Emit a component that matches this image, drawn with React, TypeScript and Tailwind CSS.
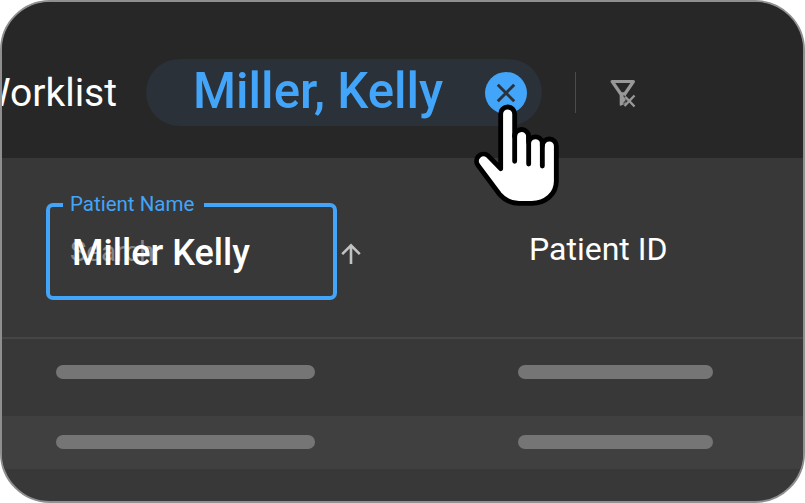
function CloseIcon() {
  return (
    <svg viewBox="0 0 42 42" className="h-[42px] w-[42px] shrink-0">
      <circle cx="21" cy="21" r="21" fill="#42a5f9" />
      <path d="M12.8 12.8 29.2 29.2M29.2 12.8 12.8 29.2" stroke="#2b323a" strokeWidth="3" />
    </svg>
  );
}

function ClearFilterIcon() {
  return (
    <svg viewBox="0 0 27 31" className="h-[31px] w-[27px] shrink-0" fill="none" stroke="#989898">
      <path d="M2.2 3.5H23.4L14.5 16.5H11.2Z" strokeWidth="3.2" strokeLinejoin="round" />
      <path d="M10.4 15H15V25L10.4 27Z" fill="#989898" strokeWidth="1.4" strokeLinejoin="round" />
      <path d="M13.5 17.5 17 21.5 13.5 25.5" stroke="#444" strokeWidth="1.2" />
      <path d="M15.5 19 24.5 28.5M24.5 17.5 14.5 28" strokeWidth="2.4" />
    </svg>
  );
}

function SortArrow() {
  return (
    <svg viewBox="0 0 20 22" className="h-[22px] w-[20px]" fill="none" stroke="#c2c2c2" strokeWidth="2.6">
      <path d="M10 21V2.5M1.2 11.2 10 2.4 18.8 11.2" />
    </svg>
  );
}

function HandCursor() {
  return (
    <svg viewBox="0 0 420 480" className="absolute left-[450px] top-[55px] h-[160px] w-[140px]" stroke="#000" strokeWidth="14.5" strokeLinecap="round" strokeLinejoin="round">
      <path
        fill="#fff"
        d="M152 341V177a21 21 0 0 1 42 0V245a21 21 0 0 1 42 -1V262a21 21 0 0 1 41 0V273a21 21 0 0 1 42 0V378C319 418 286 445 245 445H207C181 445 164 436 148 417L84 331A21 21 0 0 1 114 302Z"
      />
      <path fill="none" d="M194 240V319M236 244V327M277 262V333" />
    </svg>
  );
}

function PlaceholderRow({ className }: { className: string }) {
  return (
    <div className={`flex items-center pl-[54px] ${className}`}>
      <div className="h-[14px] w-[259px] rounded-full bg-[#757575]" />
      <div className="ml-[203px] h-[14px] w-[195px] rounded-full bg-[#757575]" />
    </div>
  );
}

export default function App() {
  return (
    <div className="relative h-[503px] w-[805px] overflow-hidden bg-white font-[Roboto,sans-serif]">
      <div className="flex h-full w-full flex-col overflow-hidden rounded-[50px] border-2 border-[#8f8f8f] bg-[#383838]">
        <header className="flex h-[156px] shrink-0 items-center bg-[#272727] pt-[25px]">
          <div className="flex w-[115px] shrink-0 justify-end overflow-hidden whitespace-nowrap text-[39px] leading-[60px] text-white">
            <span>Worklist</span>
          </div>
          <div className="ml-[29px] flex h-[67px] w-[396px] shrink-0 items-center justify-between rounded-full bg-[#2b3138] pl-[47px] pr-[15px]">
            <span className="whitespace-nowrap pb-[3px] text-[49.2px] font-medium leading-[60px] text-[#42a5f9]">Miller, Kelly</span>
            <CloseIcon />
          </div>
          <div className="ml-[33px] h-[41px] w-px bg-[#4b4b4b]" />
          <div className="ml-[34px] pt-[2px]">
            <ClearFilterIcon />
          </div>
        </header>

        <section className="flex h-[181px] shrink-0 items-start border-b-2 border-[#464646] pl-[44px] pt-[45px]">
          <div className="relative flex h-[97px] w-[291px] items-center rounded-[7px] border-4 border-[#42a5f9]">
            <label className="absolute -top-[17px] left-[13px] w-[141px] whitespace-nowrap bg-[#383838] pl-[7px] text-[20.5px] leading-[28px] text-[#42a5f9]">Patient Name</label>
            <span className="absolute left-[20px] top-[27px] text-[27.5px] leading-[36px] text-[#858585]">Search</span>
            <span className="relative ml-[22px] mt-[2px] whitespace-nowrap text-[36.1px] font-medium leading-[40px] text-white">Miller Kelly</span>
          </div>
          <div className="ml-[4px] mt-[40px]">
            <SortArrow />
          </div>
          <div className="ml-[168px] mt-[26px] whitespace-nowrap text-[32px] leading-[40px] text-white">Patient ID</div>
        </section>

        <PlaceholderRow className="h-[77px] shrink-0 pb-[11px]" />
        <PlaceholderRow className="h-[53px] shrink-0 bg-[#404040] pb-[1px]" />
      </div>
      <HandCursor />
    </div>
  );
}
